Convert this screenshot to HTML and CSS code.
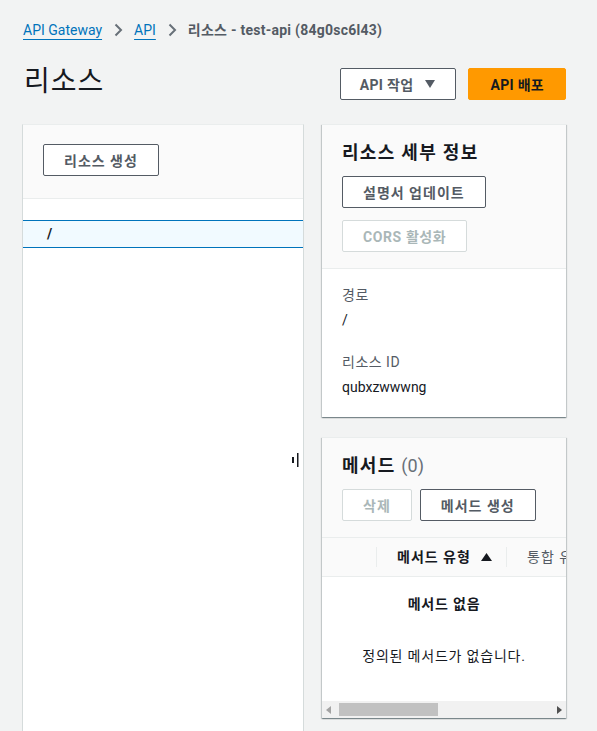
FILE: index.html
```html
<!DOCTYPE html>
<html lang="ko">
<head>
    <meta charset="utf-8">
    <title>리소스 - API Gateway</title>
    <link rel="stylesheet" href="styles.css">
</head>
<body>
    <div class="page">
        <nav class="crumbs">
            <a href="#">API Gateway</a>
            <svg class="chev" width="16" height="16" viewBox="0 0 16 16"><path d="M5.5 2.5l5.5 5.5-5.5 5.5"/></svg>
            <a href="#">API</a>
            <svg class="chev" width="16" height="16" viewBox="0 0 16 16"><path d="M5.5 2.5l5.5 5.5-5.5 5.5"/></svg>
            <span class="crumb-current">리소스 - test-api (84g0sc6l43)</span>
        </nav>

        <div class="page-head">
            <h1>리소스</h1>
            <div class="actions">
                <button class="btn btn-menu">API 작업
                    <svg class="caret" width="10" height="8" viewBox="0 0 10 8"><path d="M0 0h10L5 8z"/></svg>
                </button>
                <button class="btn btn-primary">API 배포</button>
            </div>
        </div>

        <div class="split">
            <div class="tree-panel">
                <div class="tree-head">
                    <button class="btn">리소스 생성</button>
                </div>
                <div class="tree-body">
                    <div class="tree-row selected">/</div>
                </div>
                <svg class="handle" width="8" height="16" viewBox="0 0 8 16"><rect x="0" y="4" width="2" height="6"/><rect x="5" y="0" width="1.5" height="14"/></svg>
            </div>

            <div class="detail">
                <section class="card">
                    <div class="card-head">
                        <h2>리소스 세부 정보</h2>
                        <div class="stack">
                            <button class="btn">설명서 업데이트</button>
                            <button class="btn btn-mixed" disabled>CORS 활성화</button>
                        </div>
                    </div>
                    <div class="card-body">
                        <div class="field">
                            <div class="label">경로</div>
                            <div class="value">/</div>
                        </div>
                        <div class="field">
                            <div class="label">리소스 ID</div>
                            <div class="value">qubxzwwwng</div>
                        </div>
                    </div>
                </section>

                <section class="card">
                    <div class="card-head">
                        <h2>메서드 <span class="count">(0)</span></h2>
                        <div class="row">
                            <button class="btn" disabled>삭제</button>
                            <button class="btn">메서드 생성</button>
                        </div>
                    </div>
                    <div class="table">
                        <div class="thead">
                            <div class="th th-select"></div>
                            <div class="th th-sorted">메서드 유형
                                <svg class="sort" width="11" height="8" viewBox="0 0 11 8"><path d="M5.5 0L11 8H0z"/></svg>
                            </div>
                            <div class="th">통합 유형</div>
                        </div>
                        <div class="empty">
                            <div class="empty-title">메서드 없음</div>
                            <div class="empty-text">정의된 메서드가 없습니다.</div>
                        </div>
                        <div class="hscroll">
                            <svg class="arrow" width="5" height="8" viewBox="0 0 5 8"><path d="M5 0v8L0 4z"/></svg>
                            <div class="track"><div class="thumb"></div></div>
                            <svg class="arrow arrow-on" width="5" height="8" viewBox="0 0 5 8"><path d="M0 0v8l5-4z"/></svg>
                        </div>
                    </div>
                </section>
            </div>
        </div>
    </div>
</body>
</html>
```

FILE: styles.css
```css
html, body {
    margin: 0;
    height: 100%;
    overflow: hidden;
}
body {
    background-color: #f2f3f3;
    color: #16191f;
    font-family: Roboto, "Noto Sans CJK KR", sans-serif;
    font-size: 14px;
    line-height: 22px;
}
.page {
    padding: 20px 31px 0 22px;
}

/* breadcrumb */
.crumbs {
    display: flex;
    align-items: center;
    height: 20px;
    line-height: 20px;
    margin-left: 1px;
}
.crumbs a {
    color: #0073bb;
    text-decoration: underline;
    text-underline-offset: 4px;
    text-decoration-thickness: 1px;
}
.chev {
    margin: 0 8px;
    fill: none;
    stroke: #687078;
    stroke-width: 2;
}
.crumb-current {
    color: #545b64;
    font-weight: 700;
    letter-spacing: 0.25px;
}

/* header */
.page-head {
    display: flex;
    justify-content: space-between;
    align-items: flex-start;
    margin-top: 28px;
}
h1 {
    margin: -2px 0 0 2px;
    font-size: 28px;
    font-weight: 400;
    line-height: 32px;
    letter-spacing: 1px;
}
.actions {
    display: flex;
    gap: 12px;
}

/* buttons */
.btn {
    display: inline-flex;
    align-items: center;
    gap: 12px;
    height: 32px;
    padding: 0 20px;
    border: 1px solid #545b64;
    border-radius: 2px;
    background-color: #fff;
    color: #545b64;
    font-family: inherit;
    font-size: 14px;
    font-weight: 700;
    letter-spacing: 1px;
    cursor: pointer;
}
.btn:disabled {
    border-color: #d5dbdb;
    color: #aab7b8;
    cursor: default;
}
.btn-menu {
    padding: 0 20px 0 19px;
    letter-spacing: 0.3px;
}
.btn-mixed {
    letter-spacing: 0.6px;
}
.btn-primary {
    background-color: #ff9900;
    border-color: #ff9900;
    color: #16191f;
    padding: 0 21px;
    letter-spacing: 0.3px;
}
.caret {
    fill: #545b64;
}

/* split layout */
.split {
    display: flex;
    gap: 18px;
    margin-top: 24px;
    align-items: flex-start;
}
.tree-panel {
    position: relative;
    width: 282px;
    height: 640px;
    background-color: #fff;
    border-left: 1px solid #d5dbdb;
    border-right: 1px solid #d5dbdb;
    border-top: 1px solid #eaeded;
    box-sizing: border-box;
}
.tree-head {
    background-color: #fafafa;
    padding: 19px 20px 22px;
    border-bottom: 1px solid #eaeded;
}
.tree-body {
    padding-top: 21px;
}
.tree-row {
    height: 26px;
    line-height: 26px;
    padding-left: 24px;
    font-weight: 700;
}
.tree-row.selected {
    background-color: #f1faff;
    border-top: 1px solid #0073bb;
    border-bottom: 1px solid #0073bb;
}
.handle {
    position: absolute;
    top: 328px;
    right: 3px;
    fill: #16191f;
}

/* cards */
.detail {
    width: 244px;
    display: flex;
    flex-direction: column;
    gap: 20px;
}
.card {
    background-color: #fff;
    border-top: 1px solid #eaeded;
    box-shadow: 0 1px 1px 0 rgba(0, 28, 36, 0.3), 1px 1px 1px 0 rgba(0, 28, 36, 0.15), -1px 1px 1px 0 rgba(0, 28, 36, 0.15);
    overflow: hidden;
}
.card-head {
    background-color: #fafafa;
    padding: 17px 20px 16px;
    border-bottom: 1px solid #eaeded;
}
h2 {
    margin: 0 0 12px 0;
    font-size: 18px;
    font-weight: 700;
    line-height: 22px;
    letter-spacing: 1.3px;
}
.count {
    color: #687078;
    font-weight: 400;
    letter-spacing: 0;
}
.stack {
    display: flex;
    flex-direction: column;
    align-items: flex-start;
    gap: 12px;
}
.row {
    display: flex;
    gap: 8px;
}
.card-body {
    padding: 15px 20px 19px;
}
.field + .field {
    margin-top: 20px;
}
.label {
    color: #545b64;
    letter-spacing: 0.5px;
}
.value {
    margin-top: 3px;
}

/* table */
.thead {
    display: flex;
    align-items: center;
    width: 400px;
    height: 38px;
    background-color: #fafafa;
    border-bottom: 1px solid #eaeded;
    white-space: nowrap;
}
.th {
    display: flex;
    align-items: center;
    gap: 10px;
    line-height: 20px;
    padding: 0 20px;
    border-left: 1px solid #eaeded;
    color: #545b64;
    letter-spacing: 1px;
}
.th-select {
    width: 54px;
    height: 20px;
    padding: 0;
    border-left: none;
    box-sizing: border-box;
}
.th-sorted {
    width: 130px;
    padding-right: 10px;
    box-sizing: border-box;
    color: #16191f;
    font-weight: 700;
}
.sort {
    flex-shrink: 0;
    fill: #16191f;
}
.empty {
    text-align: center;
    padding: 16px 0 34px;
    letter-spacing: 0.8px;
}
.empty-title {
    font-weight: 700;
}
.empty-text {
    margin-top: 30px;
}
.hscroll {
    display: flex;
    align-items: center;
    height: 17px;
    padding: 0 4px;
    gap: 4px;
    background-color: #f1f1f1;
}
.arrow {
    fill: #a3a3a3;
}
.arrow-on {
    fill: #505050;
}
.track {
    flex: 1;
    padding-left: 4px;
}
.thumb {
    width: 99px;
    height: 13px;
    background-color: #c1c1c1;
}
```
